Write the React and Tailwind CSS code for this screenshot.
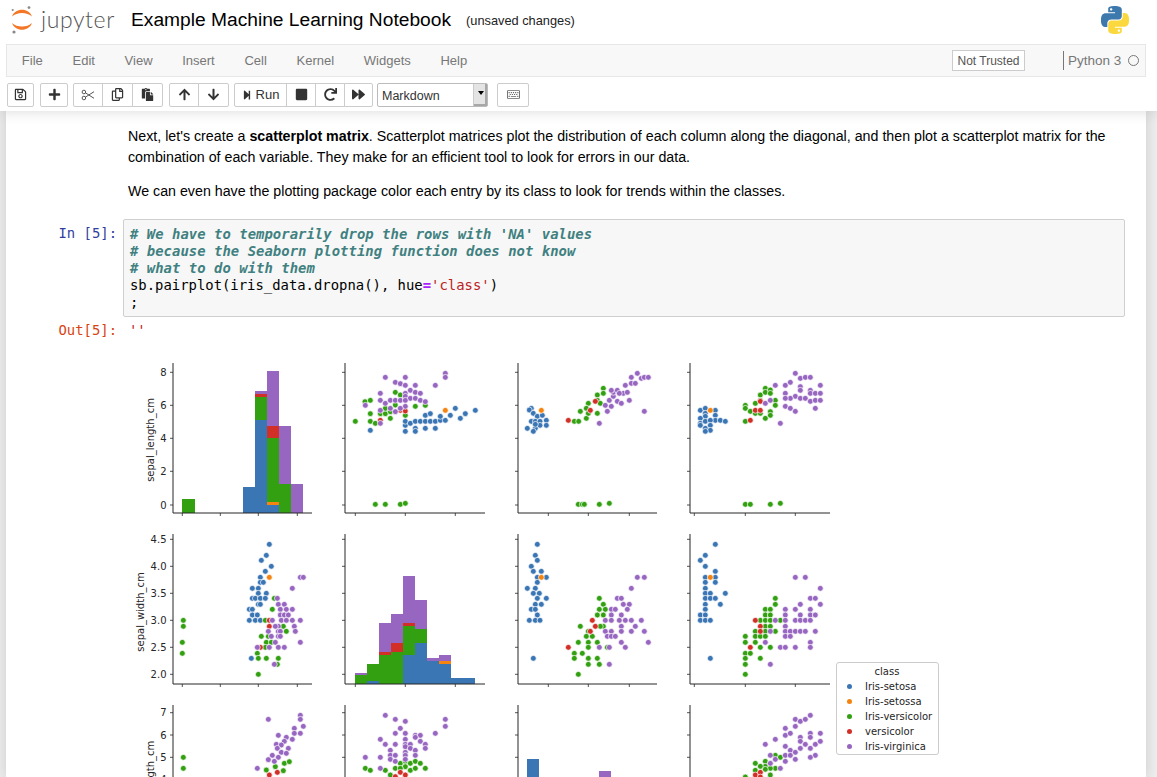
import React from "react";
import { FaRegSave, FaPlus, FaRegCopy, FaPaste, FaArrowUp, FaArrowDown, FaStepForward, FaStop, FaRedo, FaForward, FaRegKeyboard } from "react-icons/fa";

const C = { b: "#3a75b4", o: "#f5830f", g: "#33a012", r: "#d22f27", p: "#9766c0" };

const pyBlue = "M14.25.18l.9.2.73.26.59.3.45.32.34.34.25.34.16.33.1.3.04.26.02.2-.01.13V8.5l-.05.63-.13.55-.21.46-.26.38-.3.31-.33.25-.35.19-.35.14-.33.1-.3.07-.26.04-.21.02H8.77l-.69.05-.59.14-.5.22-.41.27-.33.32-.27.35-.2.36-.15.37-.1.35-.07.32-.04.27-.02.21v3.06H3.17l-.21-.03-.28-.07-.32-.12-.35-.18-.36-.26-.36-.36-.35-.46-.32-.59-.28-.73-.21-.88-.14-1.05-.05-1.23.06-1.22.16-1.04.24-.87.32-.71.36-.57.4-.44.42-.33.42-.24.4-.16.36-.1.32-.05.24-.01h.16l.06.01h8.16v-.83H6.18l-.01-2.75-.02-.37.05-.34.11-.31.17-.28.25-.26.31-.23.38-.2.44-.18.51-.15.58-.12.64-.1.71-.06.77-.04.84-.02 1.27.05zm-6.3 1.98l-.23.33-.08.41.08.41.23.34.33.22.41.09.41-.09.33-.22.23-.34.08-.41-.08-.41-.23-.33-.33-.22-.41-.09-.41.09z";
const pyYellow = "M21.04 6.11l.28.06.32.12.35.18.36.27.36.35.35.47.32.59.28.73.21.88.14 1.04.05 1.23-.06 1.23-.16 1.04-.24.86-.32.71-.36.57-.4.45-.42.33-.42.24-.4.16-.36.09-.32.05-.24.02-.16-.01h-8.22v.82h5.84l.01 2.76.02.36-.05.34-.11.31-.17.29-.25.25-.31.24-.38.2-.44.17-.51.15-.58.13-.64.09-.71.07-.77.04-.84.01-1.27-.04-1.07-.14-.9-.2-.73-.25-.59-.3-.45-.33-.34-.34-.25-.34-.16-.33-.1-.3-.04-.25-.02-.2.01-.13v-5.34l.05-.64.13-.54.21-.46.26-.38.3-.32.33-.24.35-.2.35-.14.33-.1.3-.06.26-.04.21-.02.13-.01h5.84l.69-.05.59-.14.5-.21.41-.28.33-.32.27-.35.2-.36.15-.36.1-.35.07-.32.04-.28.02-.21V6.07h2.09l.14.01zm-6.47 14.25l-.23.33-.08.41.08.41.23.33.33.23.41.08.41-.08.33-.23.23-.33.08-.41-.08-.41-.23-.33-.33-.23-.41-.08-.41.08z";

const z3 = [130, 355], z4 = [500, 355], z5 = [130, 525], z6 = [500, 525], z7 = [130, 695];

const scatters = [
  { o: z3, b: [[721,226],[826,229],[826,211],[826,199],[841,205],[856,199],[871,199],[886,199],[901,199],[916,199],[931,196],[946,196],[856,220],[856,229],[886,181],[901,176],[931,184],[961,181],[976,160],[991,190],[1006,176],[1036,166],[886,220],[916,220]], or: [[946,166]],
    g: [[676,199],[705,140],[721,136],[721,176],[721,199],[736,205],[751,176],[766,176],[766,160],[781,190],[781,170],[796,112],[811,120],[796,150],[826,181],[856,154],[886,151],[736,448],[766,448],[811,448],[826,445]],
    r: [[751,196],[811,166],[826,168]],
    p: [[706,151],[766,67],[796,82],[811,86],[826,67],[826,91],[856,91],[916,91],[946,55],[946,67],[751,115],[751,136],[766,145],[781,136],[796,136],[811,136],[826,115],[826,124],[841,106],[856,112],[871,115],[841,130],[856,130],[871,136],[886,140],[826,136],[826,154],[811,160],[796,170],[781,160],[751,166],[751,205]] },
  { o: z4, b: [[94,160],[88,165],[100,175],[112,184],[127,181],[139,196],[139,211],[100,199],[94,199],[106,199],[120,199],[120,211],[82,220],[106,220],[100,229],[106,208]], or: [[124,166]],
    g: [[223,199],[236,199],[241,169],[259,190],[265,145],[259,160],[265,175],[292,120],[292,136],[310,100],[310,115],[301,145],[292,175],[235,448],[247,448],[253,448],[298,448],[328,445]],
    r: [[205,196],[271,166],[286,139]],
    p: [[298,205],[322,169],[433,169],[316,151],[328,136],[334,154],[340,124],[340,112],[334,106],[352,106],[352,139],[364,145],[370,115],[382,112],[388,136],[376,91],[394,67],[394,85],[406,85],[412,55],[424,70],[433,67],[445,67],[358,115]] },
  { o: z4, b: [[601,166],[616,160],[616,175],[616,184],[601,190],[646,166],[646,181],[646,196],[661,196],[676,199],[601,205],[616,199],[631,196],[616,220],[631,211],[631,226],[616,229],[601,211]], or: [[631,166]],
    g: [[736,151],[736,160],[751,169],[766,145],[766,175],[781,120],[796,100],[811,105],[796,112],[811,115],[781,136],[826,136],[811,170],[811,181],[796,190],[826,151],[736,199],[736,448],[751,448],[811,448],[841,445],[781,175]],
    r: [[751,196],[766,166],[781,166],[781,139]],
    p: [[826,91],[841,205],[796,145],[811,136],[856,91],[871,82],[886,55],[901,70],[916,67],[931,67],[961,91],[901,95],[901,106],[931,106],[886,124],[871,130],[856,115],[856,130],[856,154],[871,160],[886,169],[946,160],[901,130],[916,130],[931,115],[946,115],[961,115],[931,139],[946,136],[961,136]] },
  { o: z5, b: [[418,58],[409,91],[394,106],[424,124],[406,139],[391,157],[391,172],[400,172],[367,190],[385,190],[385,205],[409,205],[367,220],[376,220],[391,220],[406,220],[385,238],[391,238],[358,253],[367,253],[367,270],[382,270],[358,286],[376,286],[391,286],[364,400]], or: [[418,157]],
    g: [[160,286],[160,304],[157,352],[157,385],[433,220],[427,253],[406,286],[460,304],[469,319],[394,334],[415,334],[409,352],[424,352],[382,385],[385,400],[409,400],[445,400],[442,418],[385,448],[406,367]],
    r: [[418,286],[418,304],[391,367]],
    p: [[442,220],[445,238],[463,238],[451,253],[469,253],[487,253],[451,270],[463,270],[475,270],[487,190],[511,157],[520,157],[427,286],[454,286],[469,286],[487,286],[511,286],[445,304],[493,304],[415,319],[445,319],[451,319],[496,319],[424,334],[445,334],[451,334],[436,352],[511,352],[382,367],[418,367],[445,367],[463,367],[433,418],[436,304]] },
  { o: z6, b: [[112,58],[106,91],[112,106],[94,124],[100,139],[124,139],[112,157],[139,157],[112,172],[82,190],[106,190],[100,205],[118,205],[112,220],[139,220],[106,238],[124,238],[94,253],[106,253],[112,270],[88,286],[106,286],[120,286],[100,400]], or: [[124,157]],
    g: [[298,220],[310,238],[298,253],[316,253],[292,270],[310,270],[241,304],[310,304],[301,304],[265,319],[259,334],[277,334],[235,352],[265,352],[292,352],[265,367],[322,367],[223,385],[247,385],[223,400],[265,400],[292,400],[265,418],[298,418],[235,448]],
    r: [[277,286],[286,304],[271,319],[205,367]],
    p: [[412,157],[433,157],[394,190],[352,220],[364,220],[370,238],[388,238],[334,253],[346,253],[382,253],[334,270],[364,270],[316,286],[334,286],[358,286],[376,286],[394,286],[424,286],[364,304],[406,304],[316,319],[334,319],[364,319],[394,319],[433,319],[322,334],[334,334],[346,334],[364,352],[445,352],[298,367],[328,367],[376,367],[328,418]] },
  { o: z6, b: [[646,58],[616,91],[601,106],[616,124],[646,139],[616,157],[646,157],[616,172],[646,172],[616,190],[616,205],[631,205],[676,205],[616,220],[631,220],[646,220],[616,238],[661,238],[616,253],[601,270],[616,270],[601,286],[616,286],[631,286],[631,400]], or: [[631,157]],
    g: [[826,220],[826,238],[796,253],[811,253],[796,270],[811,270],[781,286],[796,286],[811,286],[841,286],[796,304],[811,304],[766,319],[796,319],[826,319],[736,334],[766,334],[781,334],[796,334],[736,352],[766,352],[781,367],[811,367],[736,385],[751,385],[736,400],[781,400],[736,418],[736,448]],
    r: [[766,286],[781,304],[781,319],[751,367]],
    p: [[886,157],[916,157],[961,190],[931,220],[946,220],[901,238],[961,238],[856,253],[886,253],[931,253],[856,270],[901,270],[931,270],[946,270],[826,286],[856,286],[886,286],[901,286],[916,286],[931,286],[856,304],[811,319],[856,319],[871,319],[886,319],[901,319],[916,319],[946,319],[856,334],[871,334],[796,352],[931,352],[841,367],[856,367],[886,367],[931,367],[811,418]] },
  { o: z7, b: [], or: [], g: [[160,187],[160,220],[409,225],[436,215],[460,227],[463,205],[478,200]], r: [[442,232],[418,240]],
    p: [[415,73],[511,61],[511,73],[520,94],[493,100],[493,115],[511,115],[487,133],[445,121],[469,127],[463,139],[439,148],[454,150],[442,160],[475,160],[454,172],[469,175],[427,181],[415,194],[445,187],[433,199],[382,220]] },
  { o: z7, b: [], or: [], g: [[706,220],[721,226],[766,226],[796,220],[811,205],[826,199],[841,205],[856,199],[871,205],[886,220],[826,215],[841,226],[856,220],[781,240],[811,220]], r: [[796,245],[811,232],[826,240]],
    p: [[766,61],[796,73],[826,79],[811,100],[796,115],[826,115],[856,121],[871,121],[751,133],[826,133],[856,127],[871,139],[766,148],[796,148],[826,148],[841,148],[886,148],[826,155],[841,160],[886,160],[781,166],[826,172],[856,166],[781,181],[796,181],[826,181],[856,181],[706,187],[751,187],[781,193],[796,199],[826,193],[751,220],[916,115],[946,73],[946,94]] },
  { o: z6, b: [], or: [], g: [[826,691],[841,697],[796,709],[766,715],[811,715],[826,730],[796,724],[781,724],[766,736],[811,730],[736,756],[781,756],[811,750],[796,733]], r: [[766,750],[781,742],[781,756]],
    p: [[931,571],[886,583],[901,589],[916,583],[856,610],[886,604],[826,643],[796,658],[856,631],[871,625],[901,637],[931,625],[961,625],[931,637],[901,649],[916,658],[946,658],[961,649],[856,664],[871,676],[886,682],[901,670],[931,670],[856,691],[871,691],[886,703],[946,691],[931,697],[811,691],[826,703],[856,709],[841,730],[811,715]] },
];

// [x0, x1, y0, y1, color] in zoom coordinates
const bars = [
  { o: z3, r: [[157,195,432,474,"g"],[339,375,396,474,"b"],[375,411,195,474,"b"],[375,411,126,195,"g"],[375,411,117,126,"r"],[375,411,108,117,"p"],[411,447,450,474,"b"],[411,447,441,450,"o"],[411,447,249,441,"g"],[411,447,213,249,"r"],[411,447,48,213,"p"],[447,483,387,474,"g"],[447,483,213,387,"p"],[483,519,387,474,"p"]] },
  { o: z5, r: [[676,711,450,478,"g"],[676,711,444,450,"p"],[711,747,468,478,"b"],[711,747,417,468,"g"],[747,783,390,478,"g"],[747,783,381,390,"r"],[747,783,294,381,"p"],[783,819,381,478,"g"],[783,819,354,381,"r"],[783,819,267,354,"p"],[819,855,390,478,"b"],[819,855,303,390,"g"],[819,855,294,303,"r"],[819,855,153,294,"p"],[855,891,354,478,"b"],[855,891,312,354,"g"],[855,891,225,312,"p"],[891,927,408,478,"b"],[891,927,399,408,"p"],[927,963,417,478,"b"],[927,963,408,417,"o"],[927,963,390,408,"p"],[963,1035,459,478,"b"]] },
  { o: z6, r: [[81,117,702,780,"b"],[297,333,738,780,"p"]] },
];

const cols = [[173, 312], [345, 485], [518, 657], [690, 830]];
const rows = [[363, 513], [534, 684], [705, 800]];
const xTicks = [[182.3, 220.3, 258.3, 297.3], [355.3, 405.3, 455.3], [548.3, 588.3, 629.3], [694.3, 745.3, 795.3]];
const yTicks = [[372.3, 405.3, 438.3, 471.3, 505], [539.3, 566.3, 593.3, 620.3, 647.3, 674.3], [712.7, 735, 757.3, 779.7]];
const yLabels = [["8", "6", "4", "2", "0"], ["4.5", "4.0", "3.5", "3.0", "2.5", "2.0"], ["7", "6", "5", "4"]];

function PairPlot() {
  const dot = (o, color) => ([x, y], i) => (
    <circle key={color + i} cx={o[0] + x / 3} cy={o[1] + y / 3} r="2.9" fill={color} stroke="#fff" strokeWidth="0.7" />
  );
  return (
    <svg className="block" width="830" height="422" viewBox="130 355 830 422" fontFamily="'DejaVu Sans', sans-serif" fontSize="10" fill="#262626">
      {bars.map((h) => h.r.map(([a, b, c, d, k], i) => (
        <rect key={h.o.join() + i} x={h.o[0] + a / 3} y={h.o[1] + c / 3} width={(b - a) / 3} height={(d - c) / 3} fill={C[k]} shapeRendering="crispEdges" />
      )))}
      {scatters.map((s, i) => (
        <g key={i}>
          {s.b.map(dot(s.o, C.b))}
          {s.or.map(dot(s.o, C.o))}
          {s.g.map(dot(s.o, C.g))}
          {s.r.map(dot(s.o, C.r))}
          {s.p.map(dot(s.o, C.p))}
        </g>
      ))}
      {rows.map(([top, bottom], ri) => cols.map(([l, r], ci) => (
        <g key={ri + "-" + ci} stroke="#262626" fill="none">
          <line x1={l} y1={top} x2={l} y2={bottom} strokeWidth="1" />
          {ri < 2 && <line x1={l} y1={bottom} x2={r} y2={bottom} strokeWidth="1" />}
          {yTicks[ri].map((y) => <line key={y} x1={l - 3} y1={y} x2={l} y2={y} strokeWidth="0.8" />)}
          {ri < 2 && xTicks[ci].map((x) => <line key={x} x1={x} y1={bottom} x2={x} y2={bottom + 3} strokeWidth="0.8" />)}
        </g>
      )))}
      {yTicks.map((ys, ri) => ys.map((y, i) => (
        <text key={ri + "t" + i} x="166.5" y={y + 3.6} textAnchor="end">{yLabels[ri][i]}</text>
      )))}
      <text transform="translate(153.5 440) rotate(-90)" textAnchor="middle">sepal_length_cm</text>
      <text transform="translate(144 612) rotate(-90)" textAnchor="middle">sepal_width_cm</text>
      <text transform="translate(153.5 782) rotate(-90)" textAnchor="middle">petal_length_cm</text>
    </svg>
  );
}

const legend = [["Iris-setosa", "bg-[#3a75b4]"], ["Iris-setossa", "bg-[#f5830f]"], ["Iris-versicolor", "bg-[#33a012]"], ["versicolor", "bg-[#d22f27]"], ["Iris-virginica", "bg-[#9766c0]"]];

function Legend() {
  return (
    <div className="absolute left-[706px] top-[307px] w-[103px] h-[93px] bg-white border border-[#ccc] rounded-[3px] text-[10px] text-[#262626] font-['DejaVu_Sans',sans-serif] pt-[1px]">
      <div className="text-center h-[15px] leading-[15px] pr-[1px]">class</div>
      {legend.map(([t, c]) => (
        <div key={t} className="flex items-center h-[15px] pl-[10px]">
          <span className={"w-[5px] h-[5px] rounded-full mr-[13px] " + c} />
          <span className="leading-[15px]">{t}</span>
        </div>
      ))}
    </div>
  );
}

function Btn({ children, className = "", first, last }) {
  return (
    <button className={"h-[24px] flex items-center justify-center gap-[4px] bg-white border border-[#ccc] text-[#333] text-[13px] " + (first ? "rounded-l-[2px] " : "-ml-px ") + (last ? "rounded-r-[2px] " : "") + className}>
      {children}
    </button>
  );
}

const menu = ["File", "Edit", "View", "Insert", "Cell", "Kernel", "Widgets", "Help"];
const mono = "font-['DejaVu_Sans_Mono','Liberation_Mono',monospace] text-[13.9px] leading-[17px]";
const comment = "font-bold italic text-[#408080] tracking-[0.04px]";

export default function App() {
  return (
    <div className="h-[777px] overflow-hidden flex flex-col bg-[#eeeeee] font-['Liberation_Sans',Arial,sans-serif]">
      <header className="relative z-10 bg-white shadow-[0_0_12px_1px_rgba(87,87,87,0.2)] h-[111px] shrink-0">
        <div className="h-[44px] flex items-center relative">
          <svg className="ml-[11px] shrink-0" width="24" height="32" viewBox="0 0 24 32">
            <path d="M1 10.5C4 1.5 18 1.5 21 10.5C16 5.8 6 5.8 1 10.5Z" fill="#f37726" />
            <path d="M1 17C4 26 18 26 21 17C16 21.7 6 21.7 1 17Z" fill="#f37726" />
            <circle cx="18" cy="1.6" r="1.4" fill="#8a8a8a" />
            <circle cx="1.7" cy="4" r="1.1" fill="#8a8a8a" />
            <circle cx="3" cy="26" r="1.6" fill="#8a8a8a" />
          </svg>
          <span className="ml-[6px] w-[90px] shrink-0 text-[23px] leading-none text-[#555] tracking-[0.6px] font-['Lato',sans-serif] font-light -mt-[5px]">jupyter</span>
          <span className="text-[19.2px] text-black whitespace-nowrap -mt-[4px]">Example Machine Learning Notebook</span>
          <span className="ml-[15px] text-[12.8px] text-[#222] whitespace-nowrap -mt-[2px]">(unsaved changes)</span>
          <svg className="absolute left-[1101px] top-[6px]" width="28" height="28" viewBox="0 0 24 24">
            <path d={pyBlue} fill="#3e79ae" />
            <path d={pyYellow} fill="#fbd93e" />
          </svg>
        </div>
        <div className="mx-[6px] w-[1140px] h-[33px] bg-[#f8f8f8] border border-[#e7e7e7] flex items-center text-[13px] text-[#777]">
          <div className="flex">
            {menu.map((m) => <span key={m} className="px-[14.85px]">{m}</span>)}
          </div>
          <div className="ml-auto flex items-center">
            <span className="h-[21px] w-[73px] flex items-center justify-center bg-white border border-[#ccc] text-[#555] text-[12px]">Not Trusted</span>
            <span className="ml-[38px] border-l border-[#777] h-[19px] pl-[4px] leading-[19px] w-[60px] whitespace-nowrap text-[13.5px]">Python 3</span>
            <span className="ml-[5px] mr-[6px] w-[11px] h-[11px] rounded-full border-[1.5px] border-[#777]" />
          </div>
        </div>
        <div className="h-[34px] pl-[7px] flex items-center pt-[1px]">
          <Btn first last className="w-[27px] text-[12px]"><FaRegSave /></Btn>
          <div className="ml-[6px]"><Btn first last className="w-[28px] text-[12px]"><FaPlus /></Btn></div>
          <div className="ml-[5px] flex">
            <Btn first className="w-[30px]">
              <svg width="14" height="12" viewBox="0 0 14 12" fill="none" stroke="#555" strokeWidth="1">
                <circle cx="2.9" cy="3" r="1.8" />
                <circle cx="2.9" cy="9" r="1.8" />
                <path d="M4.5 3.9L13 9.3M4.5 8.1L13 2.7" />
              </svg>
            </Btn>
            <Btn className="w-[31px] text-[12px]"><FaRegCopy /></Btn>
            <Btn last className="w-[31px] text-[12px]"><FaPaste /></Btn>
          </div>
          <div className="ml-[6px] flex">
            <Btn first className="w-[30px] text-[12px]"><FaArrowUp /></Btn>
            <Btn last className="w-[31px] text-[12px]"><FaArrowDown /></Btn>
          </div>
          <div className="ml-[5px] flex">
            <Btn first className="w-[53px]"><FaStepForward className="text-[10px]" /><span>Run</span></Btn>
            <Btn className="w-[30px] text-[13px]"><FaStop /></Btn>
            <Btn className="w-[30px] text-[11px]"><FaRedo /></Btn>
            <Btn last className="w-[29px] text-[12px]"><FaForward /></Btn>
          </div>
          <div className="ml-[4px] w-[111px] h-[24px] bg-white border border-[#bbb] rounded-[2px] flex items-stretch text-[12.5px] text-[#333]">
            <span className="flex-1 pl-[4px] leading-[24px]">Markdown</span>
            <span className="w-[14px] bg-[#e4e4e4] border-l border-[#ccc] shadow-[inset_-2px_-2px_0_#a8a8a8] flex items-center justify-center">
              <span className="w-0 h-0 -mt-[3px] border-x-[3px] border-x-transparent border-t-[4px] border-t-black" />
            </span>
          </div>
          <div className="ml-[9px]"><Btn first last className="w-[32px] text-[13px] text-[#666]"><FaRegKeyboard /></Btn></div>
        </div>
      </header>
      <main className="ml-[6px] w-[1140px] flex-1 bg-white shadow-[0_0_12px_1px_rgba(87,87,87,0.2)] overflow-hidden">
        <div className="pl-[122px] pt-[15px] w-[1118px] text-[14.24px] leading-[21px] text-black">
          <p>Next, let's create a <strong>scatterplot matrix</strong>. Scatterplot matrices plot the distribution of each column along the diagonal, and then plot a scatterplot matrix for the combination of each variable. They make for an efficient tool to look for errors in our data.</p>
          <p className="mt-[13px]">We can even have the plotting package color each entry by its class to look for trends within the classes.</p>
        </div>
        <div className={"mt-[17px] flex " + mono}>
          <div className="w-[111px] pt-[6px] text-right text-[#303f9f]">In [5]:</div>
          <div className="ml-[6px] w-[1002px] h-[98px] bg-[#f7f7f7] border border-[#cfcfcf] rounded-[2px] pt-[5.5px] pl-[6px] text-black whitespace-pre">
            <div className={comment}># We have to temporarily drop the rows with 'NA' values</div>
            <div className={comment}># because the Seaborn plotting function does not know</div>
            <div className={comment}># what to do with them</div>
            <div>sb.pairplot(iris_data.dropna(), hue<span className="font-bold text-[#aa22ff]">=</span><span className="text-[#ba2121]">'class'</span>)</div>
            <div>;</div>
          </div>
        </div>
        <div className={"mt-[5px] flex " + mono}>
          <div className="w-[111px] text-right text-[#d84315]">Out[5]:</div>
          <div className="ml-[12px] text-[#ba2121]">''</div>
        </div>
        <div className="relative ml-[124px] mt-[16px] w-[830px] h-[422px]">
          <PairPlot />
          <Legend />
        </div>
      </main>
    </div>
  );
}
